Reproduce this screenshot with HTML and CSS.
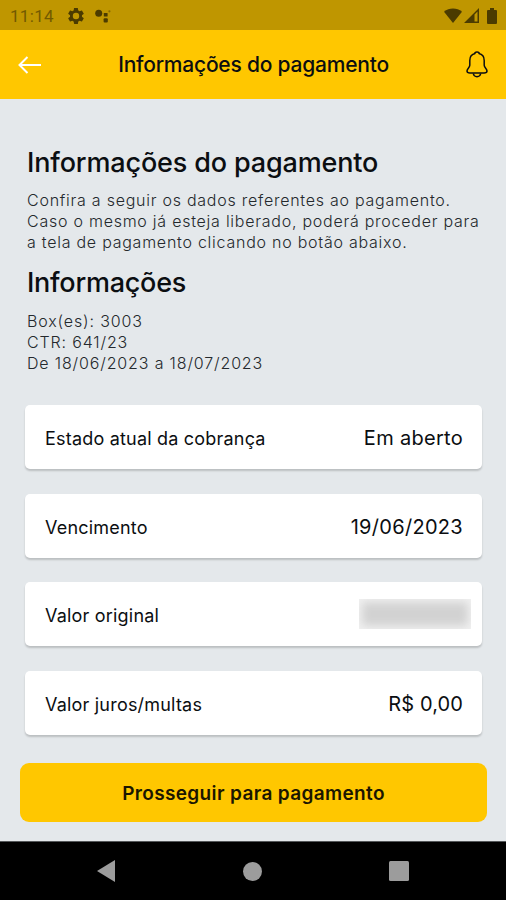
FILE: index.html
```html
<!DOCTYPE html>
<html lang="pt-BR">
<head>
    <meta charset="UTF-8">
    <meta name="viewport" content="width=device-width, initial-scale=1.0">
    <title>Informações do pagamento</title>
    <link rel="stylesheet" href="styles.css">
</head>
<body>
    <div class="status-bar">
        <span class="clock">11:14</span>
        <svg class="gear" width="16" height="16" viewBox="2 2 20 20">
            <path fill="currentColor" fill-rule="evenodd" d="M19.4 13c0-.3.1-.6.1-1s0-.7-.1-1l2.1-1.6c.2-.2.2-.4.1-.6l-2-3.5c-.1-.2-.4-.3-.6-.2l-2.5 1c-.5-.4-1.1-.7-1.7-1l-.4-2.600c0-.3-.2-.5-.4-.5h-4c-.2 0-.5.2-.5.4l-.4 2.700c-.6.2-1.100.6-1.700 1l-2.400-1c-.3-.1-.5 0-.7.2l-2 3.500c-.1.2 0 .5.2.6L4.600 11c0 .3-.1.6-.1 1s0 .7.1 1l-2.100 1.600c-.2.2-.3.4-.2.6l2 3.500c.2.2.4.3.7.2l2.400-1c.6.4 1.100.7 1.700 1l.4 2.600c0 .3.3.5.5.5h4c.2 0 .4-.2.4-.4l.4-2.700c.6-.2 1.200-.6 1.700-1l2.500 1c.2.1.5 0 .6-.2l2-3.500c.1-.2.1-.5-.1-.6zM12 16a4 4 0 1 1 0-8 4 4 0 0 1 0 8z"/>
        </svg>
        <svg class="assistant" width="16" height="14" viewBox="0 0 16 14">
            <circle cx="3.700" cy="4.200" r="3.500" fill="currentColor"/>
            <rect x="8.800" y="4" width="3.800" height="3.600" rx=".6" fill="currentColor"/>
            <rect x="8.600" y="9.200" width="4.200" height="4.200" rx="1" fill="currentColor"/>
            <circle cx="14.400" cy="2.300" r="1.100" fill="currentColor" opacity=".5"/>
        </svg>
        <div class="status-icons">
            <svg width="18" height="15" viewBox="0 0 18 15">
                <path fill="currentColor" d="M0 3.800C5 -.6 13 -.6 18 3.800L9 15z"/>
            </svg>
            <svg width="15" height="15" viewBox="0 0 15 15">
                <path fill="currentColor" fill-rule="evenodd" d="M0 15L15 0v15zM10.500 6.500v7H13.500V3.500z"/>
            </svg>
            <svg class="battery" width="10" height="16" viewBox="0 0 10 16">
                <path fill="currentColor" d="M3 0h4v2h2q1 0 1 1v12q0 1-1 1H1q-1 0-1-1V3q0-1 1-1h2z"/>
            </svg>
        </div>
    </div>

    <header class="app-bar">
        <svg class="back" width="24" height="18" viewBox="0 0 24 18">
            <path d="M23 9H1.500M9.500 1L1.500 9l8 8" fill="none" stroke="currentColor" stroke-width="2"/>
        </svg>
        <div class="app-title">Informações do pagamento</div>
        <svg class="bell" width="22" height="27" viewBox="0 0 22 27">
            <g fill="none" stroke="currentColor" stroke-width="1.500" stroke-linejoin="round">
                <path d="M9.200 2.600C5.500 3.300 3.800 6.200 3.800 9.500v4.700c0 2.400-2.800 3.600-2.800 5.800 0 1.600 1.300 2 3 2h14c1.700 0 3-.4 3-2 0-2.200-2.800-3.400-2.800-5.800V9.500c0-3.300-1.700-6.200-5.400-6.900"/>
                <path d="M8.700 3C8.700.3 13.300.3 13.300 3M7.300 22.500c.7 4.200 6.700 4.200 7.400 0"/>
            </g>
        </svg>
    </header>

    <main class="content">
        <section class="intro">
            <h1>Informações do pagamento</h1>
            <p>Confira a seguir os dados referentes ao pagamento.<br>Caso o mesmo já esteja liberado, poderá proceder para<br>a tela de pagamento clicando no botão abaixo.</p>
            <h2>Informações</h2>
            <p class="details">Box(es): 3003<br>CTR: 641/23<br>De 18/06/2023 a 18/07/2023</p>
        </section>

        <div class="cards">
            <div class="card">
                <span class="label">Estado atual da cobrança</span>
                <span class="value">Em aberto</span>
            </div>
            <div class="card">
                <span class="label">Vencimento</span>
                <span class="value">19/06/2023</span>
            </div>
            <div class="card">
                <span class="label">Valor original</span>
                <span class="hidden-value"></span>
            </div>
            <div class="card">
                <span class="label">Valor juros/multas</span>
                <span class="value money">R$ 0,00</span>
            </div>
        </div>

        <button class="pay">Prosseguir para pagamento</button>
    </main>

    <nav class="nav-bar">
        <svg width="18" height="22" viewBox="0 0 18 22"><path fill="currentColor" d="M18 0v22L0 11z"/></svg>
        <svg width="19" height="19" viewBox="0 0 19 19"><circle cx="9.500" cy="9.500" r="9.500" fill="currentColor"/></svg>
        <svg width="20" height="20" viewBox="0 0 20 20"><rect width="20" height="20" rx="1.500" fill="currentColor"/></svg>
    </nav>
</body>
</html>
```
FILE: styles.css
```css
* {
    box-sizing: border-box;
}
body {
    margin: 0;
    height: 900px;
    display: flex;
    flex-direction: column;
    overflow: hidden;
    font-family: Inter, "Liberation Sans", sans-serif;
    background-color: #e4e8eb;
    color: #0b0e11;
}
svg {
    display: block;
    flex: none;
}
.status-bar {
    height: 30px;
    display: flex;
    align-items: center;
    padding: 1px 9px 0 10px;
    background-color: #bf9600;
    color: #4b3b00;
}
.clock {
    width: 58px;
    font-family: Roboto, sans-serif;
    font-size: 17px;
    letter-spacing: 0.3px;
    color: #725a00;
}
.assistant {
    margin-left: 11px;
}
.status-icons {
    margin-left: auto;
    display: flex;
    align-items: center;
    gap: 2px;
}
.battery {
    margin-left: 6px;
}
.app-bar {
    height: 69px;
    display: flex;
    align-items: center;
    justify-content: space-between;
    padding: 0 18px;
    background-color: #ffc700;
}
.back {
    color: #fff;
}
.app-title {
    margin: -1px 1px 0 0;
    font-size: 21px;
    font-weight: 500;
    letter-spacing: -0.22px;
}
.content {
    flex: 1;
    padding: 45px 19px 0 20px;
}
.intro {
    padding-left: 7px;
    white-space: nowrap;
}
h1, h2 {
    margin: 0;
    font-size: 27px;
    font-weight: 500;
    line-height: 38px;
    letter-spacing: -0.15px;
}
h1 {
    margin-bottom: 8px;
}
h2 {
    margin: 11px 0 9px;
    letter-spacing: -0.25px;
}
p {
    margin: 0;
    font-size: 16px;
    font-weight: 300;
    line-height: 21px;
    letter-spacing: 0.75px;
    color: #24292d;
}
.details {
    letter-spacing: 0.85px;
}
.cards {
    display: flex;
    flex-direction: column;
    gap: 24.500px;
    margin: 31px 5px 28px;
}
.card {
    height: 64px;
    display: flex;
    align-items: center;
    justify-content: space-between;
    padding: 2px 19px 0 20px;
    background-color: #fff;
    border-radius: 5px;
    box-shadow: 0 2px 2px rgba(0, 0, 0, 0.18);
}
.label {
    padding-top: 1px;
    font-size: 18px;
    letter-spacing: 0.2px;
}
.value {
    font-size: 20px;
    letter-spacing: 0.3px;
}
.money {
    letter-spacing: 0.1px;
}
.hidden-value {
    width: 112px;
    height: 30px;
    margin: -3px -8px 0 0;
    background-color: #d2d2d2;
    box-shadow: inset 0 0 10px 3px #f2f2f2;
}
.pay {
    display: block;
    width: 100%;
    height: 59px;
    padding: 2px 0 0;
    border: none;
    border-radius: 9px;
    background-color: #ffc700;
    color: #1b1600;
    font-family: inherit;
    font-size: 19px;
    font-weight: 600;
    letter-spacing: 0.36px;
}
.nav-bar {
    height: 59px;
    display: flex;
    align-items: center;
    justify-content: space-between;
    padding: 0 97px;
    background-color: #000;
    border-top: 1px solid #55585a;
    color: #9c9c9c;
}
```
